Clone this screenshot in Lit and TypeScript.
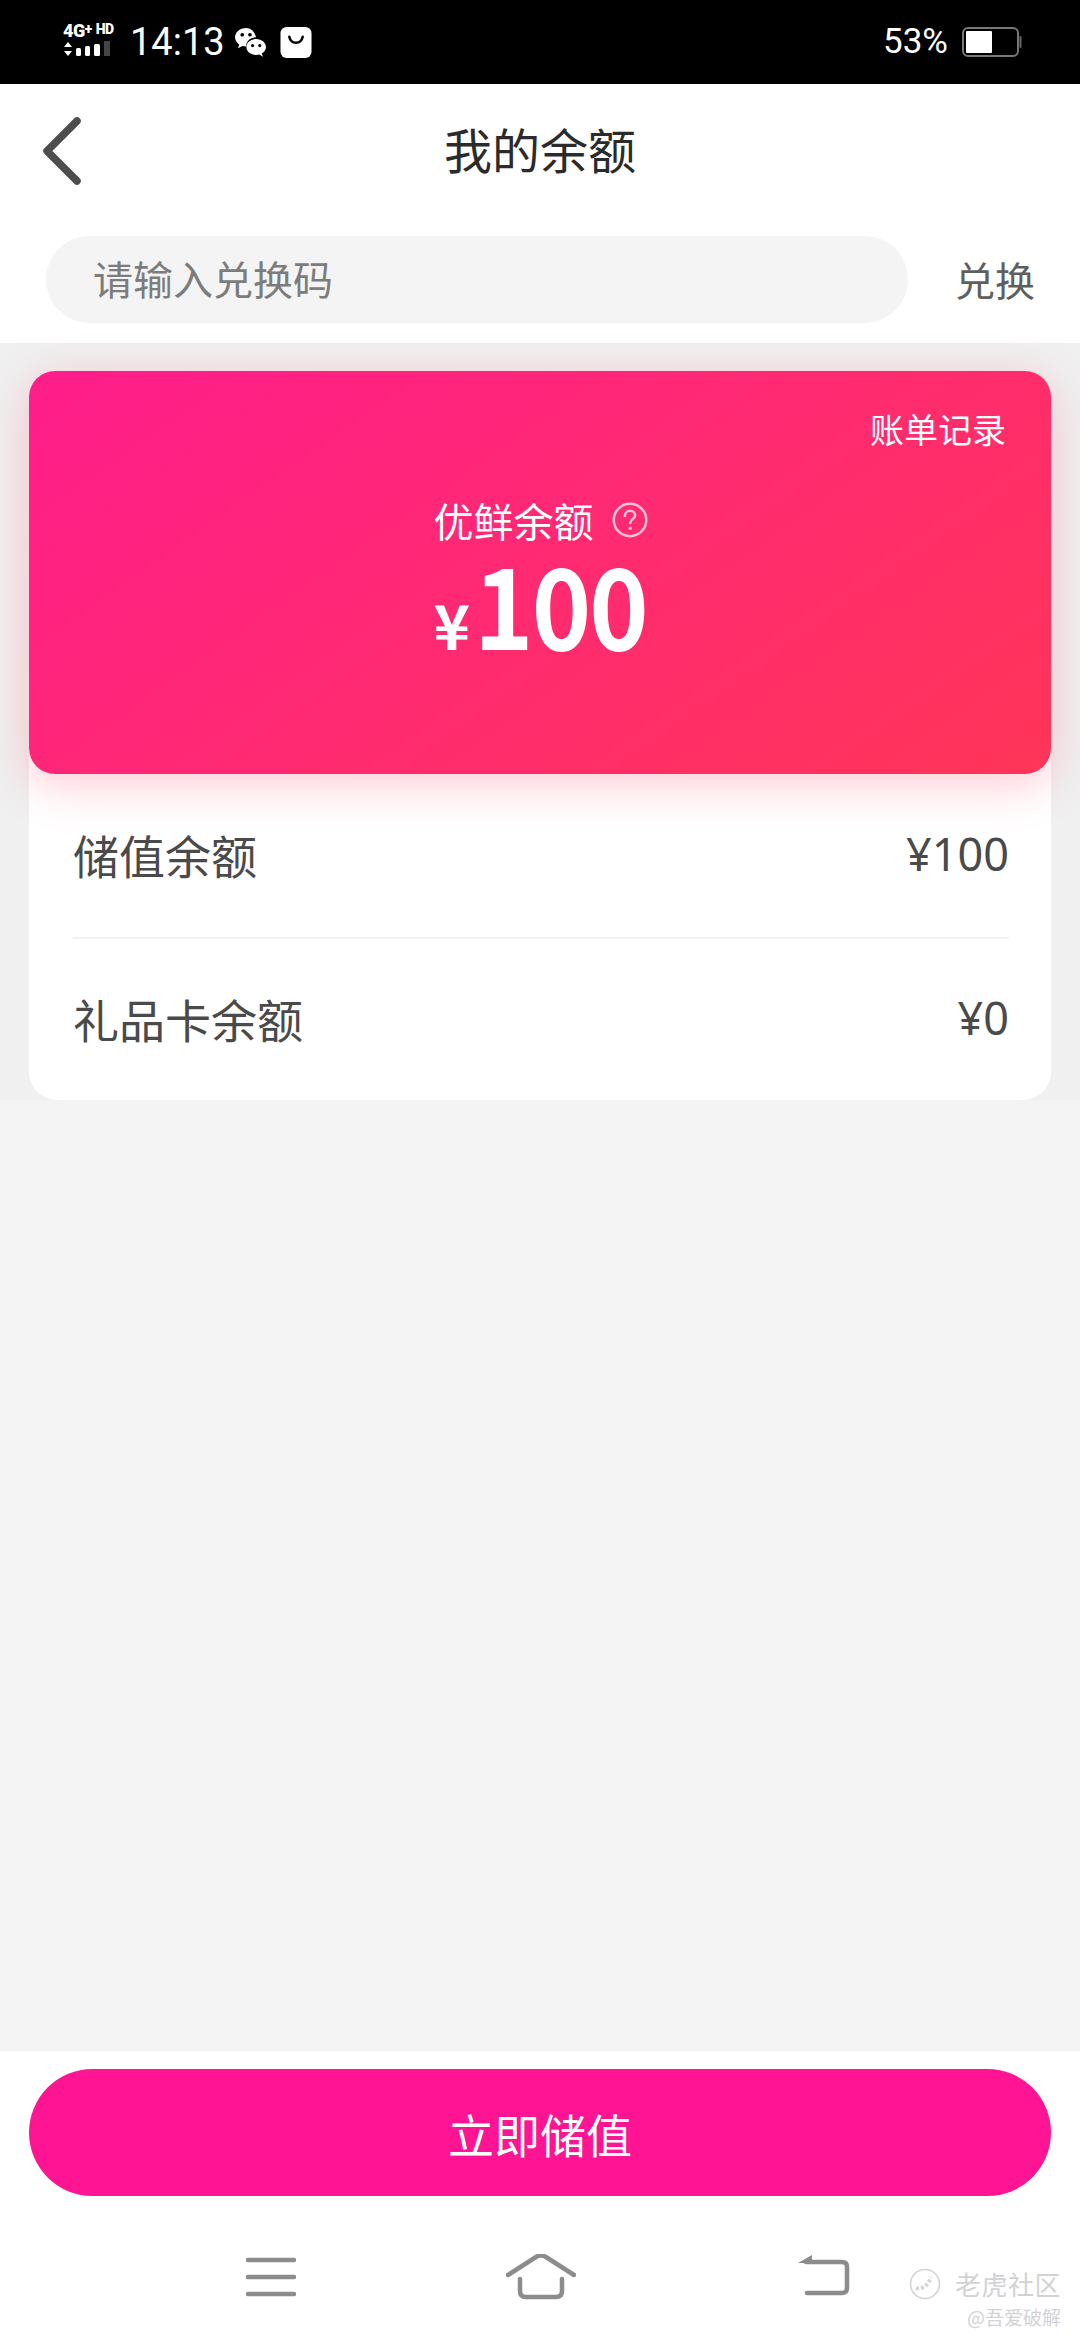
import { LitElement, html, css } from 'lit';
import { customElement } from 'lit/decorators.js';

@customElement('app-root')
export class AppRoot extends LitElement {
  static styles = css`
    :host {
      display: block;
      width: 1080px;
      height: 2340px;
      font-family: 'Noto Sans CJK SC', 'Noto Sans', sans-serif;
      color: #4a4a4a;
    }
    .page {
      position: relative;
      display: flex;
      flex-direction: column;
      width: 1080px;
      height: 2340px;
      background: #f4f4f4;
      overflow: hidden;
    }

    /* status bar */
    .status {
      flex: none;
      height: 84px;
      background: #000;
      color: #fff;
      display: flex;
      align-items: center;
      padding: 0 58px 0 63px;
      font-family: Roboto, sans-serif;
    }
    .net {
      display: flex;
      flex-direction: column;
      width: 60px;
      height: 36px;
      margin-top: -4px;
    }
    .net-text {
      font-size: 18px;
      line-height: 15px;
      font-weight: 900;
      letter-spacing: -0.5px;
      white-space: nowrap;
    }
    .net-text small {
      font-size: 14px;
      vertical-align: 3px;
    }
    .net svg {
      display: block;
      margin-top: 3px;
    }
    .time {
      margin-left: 7px;
      font-size: 38px;
      line-height: 40px;
    }
    .wechat {
      margin-left: 9px;
    }
    .bag {
      margin-left: 13px;
    }
    .spacer {
      flex: 1;
    }
    .pct {
      font-size: 35px;
      line-height: 40px;
    }
    .battery {
      margin-left: 14px;
    }

    /* header */
    .top {
      flex: none;
      height: 259px;
      background: #fff;
      display: flex;
      flex-direction: column;
    }
    .header {
      position: relative;
      height: 152px;
      display: flex;
      align-items: center;
      justify-content: center;
      box-sizing: border-box;
      padding-bottom: 24px;
      font-size: 48px;
      color: #2b2b2b;
    }
    .back {
      position: absolute;
      left: 42px;
      top: 32px;
    }
    .search {
      display: flex;
      align-items: center;
      padding-left: 46px;
    }
    .pill {
      width: 862px;
      height: 87px;
      border-radius: 44px;
      background: #f4f4f4;
      box-sizing: border-box;
      padding: 0 0 4px 47px;
      display: flex;
      align-items: center;
      font-size: 40px;
      color: #7c7c7c;
    }
    .redeem {
      margin: 0 0 2px 47px;
      font-size: 40px;
      color: #5f5f5f;
    }

    /* balance card */
    .section {
      flex: none;
      background: #f0f0f0;
      padding: 28px 29px 0;
    }
    .panel {
      background: #fff;
      border-radius: 28px;
    }
    .card {
      position: relative;
      height: 403px;
      border-radius: 26px;
      background: linear-gradient(145deg, #ff1d8b 0%, #ff2a72 50%, #ff3558 100%);
      box-shadow: 0 10px 46px rgba(255, 60, 100, 0.28);
      color: #fff;
      display: flex;
      flex-direction: column;
      align-items: center;
    }
    .bill {
      position: absolute;
      top: 35px;
      right: 45px;
      font-size: 34px;
      line-height: 46px;
    }
    .label {
      margin: 123px 0 0 1px;
      display: flex;
      align-items: center;
      gap: 18px;
      font-size: 40px;
      line-height: 52px;
      height: 52px;
    }
    .amount {
      display: flex;
      align-items: baseline;
      height: 100px;
      margin: 5px 0 0 1px;
      font-weight: 700;
      line-height: 100px;
    }
    .amount .cur {
      font-size: 62px;
      margin-right: 4px;
    }
    .amount .num {
      display: inline-block;
      font-size: 112px;
      letter-spacing: -2px;
      transform: scaleX(0.9);
      transform-origin: left;
      margin-right: -19px;
    }
    .row {
      box-sizing: border-box;
      height: 163px;
      margin: 0 42px 0 44px;
      padding-bottom: 4px;
      display: flex;
      align-items: center;
      justify-content: space-between;
      font-size: 46px;
      color: #4a4a4a;
    }
    .row + .row {
      border-top: 2px solid #f2f2f2;
    }
    .row .val {
      font-size: 45px;
      font-family: 'Noto Sans', 'Noto Sans CJK SC', sans-serif;
    }
    .gap {
      flex: 1;
    }

    /* bottom */
    .bottom {
      flex: none;
      height: 289px;
      background: #fff;
      box-sizing: border-box;
      padding: 18px 29px 0;
    }
    .cta {
      height: 127px;
      border-radius: 64px;
      background: #ff1493;
      color: #fff;
      font-size: 46px;
      display: flex;
      align-items: center;
      justify-content: center;
    }
    .nav {
      display: flex;
      align-items: flex-start;
      padding: 58px 0 0 217px;
    }
    .nav svg {
      display: block;
      flex: none;
    }
    .nav .menu {
      margin-top: 3px;
    }
    .nav .home {
      margin-left: 210px;
    }
    .nav .ret {
      margin-left: 222px;
    }
    .mark {
      position: absolute;
      right: 19px;
      bottom: 10px;
      display: flex;
      flex-direction: column;
      align-items: flex-end;
      color: #d2d2d5;
    }
    .mark-top {
      display: flex;
      align-items: center;
      gap: 14px;
      font-size: 26px;
      line-height: 34px;
      letter-spacing: 0.5px;
    }
    .mark-sub {
      font-size: 19px;
      line-height: 26px;
      margin-top: 3px;
    }
  `;

  render() {
    return html`
      <div class="page">
        <div class="status">
          <div class="net">
            <div class="net-text">4G<small>+</small> <small>HD</small></div>
            <svg width="48" height="16" viewBox="0 0 48 16">
              <path d="M1 6 L5 1 L9 6Z M1 10 L9 10 L5 15Z" fill="#fff" />
              <rect x="13" y="7" width="5" height="8" rx="1.500" fill="#fff" />
              <rect x="22" y="5" width="5" height="10" rx="1.500" fill="#fff" />
              <rect x="31" y="3" width="6" height="12" rx="1.500" fill="#fff" />
              <rect x="41" y="0" width="6" height="15" fill="#444" />
            </svg>
          </div>
          <span class="time">14:13</span>
          <svg class="wechat" width="33" height="33" viewBox="0 0 32 32">
            <path d="M12 2C5.800 2 1 6 1 11c0 2.800 1.500 5.200 4 6.900L4 21.500l4.200-2.200c1.100.3 2.300.5 3.600.5-.3-4.900 4.200-9 9.600-9C20.300 6 16.500 2 12 2Z" fill="#fff" />
            <circle cx="8" cy="8.500" r="1.800" fill="#000" />
            <circle cx="15.500" cy="8.500" r="1.800" fill="#000" />
            <path d="M21.500 12.500c-5.200 0-9.500 3.500-9.500 7.800s4.300 7.800 9.500 7.800c1 0 2-.1 3-.4l3.500 2-1-3.200c2.400-1.400 4-3.600 4-6.200 0-4.300-4.300-7.800-9.500-7.800Z" fill="#fff" />
            <circle cx="18" cy="19" r="1.500" fill="#000" />
            <circle cx="25" cy="19" r="1.500" fill="#000" />
          </svg>
          <svg class="bag" width="32" height="31" viewBox="0 0 30 30">
            <rect x="0" y="0" width="30" height="30" rx="6" fill="#fff" />
            <path d="M8.500 9.500c.8 4 3.400 5.800 6.500 5.800s5.700-1.800 6.500-5.800" fill="none" stroke="#000" stroke-width="2.400" stroke-linecap="round" />
          </svg>
          <span class="spacer"></span>
          <span class="pct">53%</span>
          <svg class="battery" width="60" height="30" viewBox="0 0 60 30">
            <rect x="1" y="1" width="55" height="28" rx="5" fill="none" stroke="#777" stroke-width="2" />
            <rect x="4" y="4" width="26" height="22" rx="1" fill="#fff" />
            <rect x="57.500" y="9" width="2" height="12" rx="1" fill="#666" />
          </svg>
        </div>

        <div class="top">
          <div class="header">
            <svg class="back" width="40" height="70" viewBox="0 0 40 70">
              <path d="M35 5 L5 35 L35 65" fill="none" stroke="#4d4d4d" stroke-width="7.500" stroke-linecap="round" stroke-linejoin="round" />
            </svg>
            我的余额
          </div>
          <div class="search">
            <div class="pill">请输入兑换码</div>
            <span class="redeem">兑换</span>
          </div>
        </div>

        <div class="section">
          <div class="panel">
            <div class="card">
              <span class="bill">账单记录</span>
              <div class="label">
                <span>优鲜余额</span>
                <svg width="36" height="36" viewBox="0 0 35 35">
                  <circle cx="17.500" cy="17.500" r="15.800" fill="none" stroke="#ffc4d6" stroke-width="2.400" />
                  <path d="M12.500 13.500c0-3 2.200-5 5-5s5 1.900 5 4.500c0 3.600-4.800 3.600-4.800 7.500" fill="none" stroke="#ffc4d6" stroke-width="2.400" stroke-linecap="round" />
                  <circle cx="17.700" cy="25.500" r="1.600" fill="#ffc4d6" />
                </svg>
              </div>
              <div class="amount">
                <span class="cur">¥</span>
                <span class="num">100</span>
              </div>
            </div>
            <div class="row"><span>储值余额</span><span class="val">¥100</span></div>
            <div class="row"><span>礼品卡余额</span><span class="val">¥0</span></div>
          </div>
        </div>

        <div class="gap"></div>

        <div class="bottom">
          <div class="cta">立即储值</div>
          <div class="nav">
            <svg class="menu" width="50" height="40" viewBox="0 0 50 40">
              <path d="M2 3H48M2 20H48M2 37H48" stroke="#8c8c8c" stroke-width="4.500" stroke-linecap="round" />
            </svg>
            <svg class="home" width="70" height="46" viewBox="0 0 70 46">
              <path d="M2 21 L30 3 Q35 0 40 3 L68 21" fill="none" stroke="#8c8c8c" stroke-width="4.500" stroke-linecap="round" />
              <path d="M14 25 V37 Q14 43 20 43 H50 Q56 43 56 37 V25" fill="none" stroke="#8c8c8c" stroke-width="4.500" stroke-linecap="round" />
            </svg>
            <svg class="ret" width="52" height="42" viewBox="0 0 52 42">
              <path d="M0 9 L14 1 V9Z" fill="#8c8c8c" />
              <path d="M8 8 H44 Q49 8 49 13 V34 Q49 39 44 39 H9" fill="none" stroke="#8c8c8c" stroke-width="4.500" stroke-linecap="round" />
            </svg>
          </div>
        </div>

        <div class="mark">
          <div class="mark-top">
            <svg width="32" height="32" viewBox="0 0 32 32">
              <circle cx="16" cy="16" r="14.500" fill="none" stroke="#d4d4d6" stroke-width="1.600" />
              <path d="M7 20c5 2 12-2 15-11" fill="none" stroke="#d4d4d6" stroke-width="4" stroke-dasharray="3 2" />
            </svg>
            <span>老虎社区</span>
          </div>
          <div class="mark-sub">@吾爱破解</div>
        </div>
      </div>
    `;
  }
}

declare global {
  interface HTMLElementTagNameMap {
    'app-root': AppRoot;
  }
}
